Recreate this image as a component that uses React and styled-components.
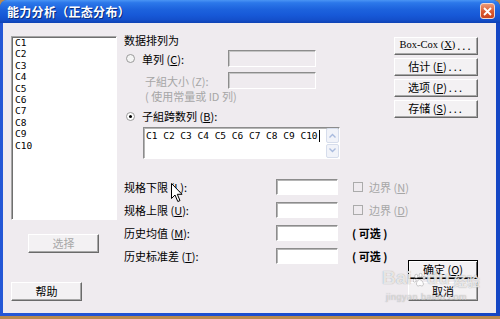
import React from 'react';
import styled, { createGlobalStyle, css } from 'styled-components';

const CJK = `"Noto Sans CJK SC", "Noto Sans", sans-serif`;
const MONO = `"DejaVu Sans Mono", "Liberation Mono", monospace`;
const FACE = '#EFEBEF';

const GlobalStyle = createGlobalStyle`
  html, body {
    margin: 0;
    padding: 0;
    background: #B88A4E;
  }
  body {
    font-family: ${CJK};
    font-size: 11px;
    color: #000;
  }
`;

const Window = styled.div`
  position: relative;
  width: 500px;
  height: 316px;
  display: flex;
  flex-direction: column;
  background: linear-gradient(to right, #2457D6, #1A4ECF 50%, #1446C4);
  border-radius: 7px 7px 0 0;
  overflow: hidden;
`;

const TitleBar = styled.div`
  height: 23px;
  flex-shrink: 0;
  display: flex;
  align-items: center;
  justify-content: space-between;
  padding: 0 5px 0 7px;
  background: linear-gradient(
    to bottom,
    #4A95F4 0%,
    #2C78EA 12%,
    #1D63DD 40%,
    #1759D8 65%,
    #1450CC 85%,
    #0E42B4 100%
  );
  color: #fff;
  font: bold 12px/1 ${CJK};
  text-shadow: 1px 1px 0 #0A2C7A;
  letter-spacing: 0.3px;
`;

const CloseBtn = styled.div`
  width: 15px;
  height: 16px;
  margin-top: -1px;
  box-sizing: border-box;
  border: 1px solid #F3D7CC;
  border-radius: 3px;
  background: linear-gradient(to bottom, #EC9A78, #D9582F 55%, #C9441E);
  display: flex;
  align-items: center;
  justify-content: center;
`;

const Body = styled.div`
  flex: 1;
  margin: 0 4px 3px 3px;
  background: ${FACE};
  display: flex;
  padding: 11px 18px 12px 8px;
  box-sizing: border-box;
`;

const LeftCol = styled.div`
  width: 106px;
  display: flex;
  flex-direction: column;
  padding-top: 2px;
`;

const ListBox = styled.div`
  height: 184px;
  box-sizing: border-box;
  background: #fff;
  border: 1px solid;
  border-color: #A5A5A5 #fff #fff #A5A5A5;
  box-shadow: inset 1px 1px 0 #6F6F6F;
  padding: 0 0 0 3px;
`;

const ListItem = styled.div`
  font: 9.5px/11.4px ${MONO};
  color: #000;
`;

const Button = styled.button`
  box-sizing: border-box;
  width: ${(p) => p.$w || 70}px;
  height: ${(p) => p.$h || 19}px;
  margin: 0;
  padding: 0 0 1px;
  background: #F3F1F3;
  border: 1px solid;
  border-color: #FFFFFF #6A6A6A #6A6A6A #FFFFFF;
  box-shadow: inset -1px -1px 0 #A8A8A8;
  font: 11px/1 ${CJK};
  color: ${(p) => (p.disabled ? '#A8A8A8' : '#000')};
  display: flex;
  align-items: center;
  justify-content: center;
  white-space: nowrap;
  ${(p) =>
    p.$default &&
    css`
      border-color: #000;
      box-shadow: inset 1px 1px 0 #fff, inset -1px -1px 0 #6A6A6A;
    `}
`;

const Dots = styled.span`
  letter-spacing: 2px;
  margin-left: 2px;
`;

const SerifText = styled.span`
  font: 10.5px/1 "Liberation Serif", serif;
`;

const MidCol = styled.div`
  width: 270px;
  margin-left: 7px;
  display: flex;
  flex-direction: column;
`;

const Heading = styled.div`
  height: 12px;
  line-height: 12px;
`;

const OptionRow = styled.div`
  display: grid;
  grid-template-columns: 104px 88px;
  align-items: center;
  height: 17px;
  margin-top: ${(p) => p.$mt || 0}px;
`;

const RadioLabel = styled.label`
  display: flex;
  align-items: center;
  gap: 7px;
  padding-left: 2px;
  line-height: 12px;
  white-space: nowrap;
`;

const Radio = styled.span`
  width: 9px;
  height: 9px;
  box-sizing: border-box;
  border-radius: 50%;
  border: 1px solid #9A9A9A;
  background: ${(p) => (p.$checked ? '#fff' : '#F4F4F4')};
  display: flex;
  align-items: center;
  justify-content: center;
  &::after {
    content: '';
    width: 3px;
    height: 3px;
    border-radius: 50%;
    background: ${(p) => (p.$checked ? '#000' : 'transparent')};
  }
`;

const Indented = styled.div`
  padding-left: 21px;
  color: ${(p) => (p.$dim ? '#A6A6A6' : '#000')};
  line-height: 12px;
  white-space: nowrap;
  margin-top: ${(p) => p.$mt || 0}px;
`;

const Field = styled.div`
  box-sizing: border-box;
  height: ${(p) => p.$h || 16}px;
  background: ${(p) => (p.disabled ? FACE : '#fff')};
  border: 1px solid;
  border-color: #8C8C8C #fff #fff #8C8C8C;
  box-shadow: inset 1px 1px 0 ${(p) => (p.disabled ? '#C4C4C4' : '#B5B5B5')};
`;

const TextArea = styled.div`
  margin: 5px 0 0 19px;
  width: 197px;
  height: 32px;
  box-sizing: border-box;
  background: #fff;
  border: 1px solid;
  border-color: #8C8C8C #fff #fff #8C8C8C;
  box-shadow: inset 1px 1px 0 #B5B5B5;
  display: flex;
`;

const AreaText = styled.div`
  flex: 1;
  padding: 2px 0 0 2px;
  font: 9.5px/12px ${MONO};
  display: flex;
  align-items: flex-start;
  white-space: pre;
`;

const Caret = styled.span`
  display: inline-block;
  width: 1px;
  height: 12px;
  background: #000;
  margin-left: 1px;
`;

const ScrollCol = styled.div`
  width: 13px;
  display: flex;
  flex-direction: column;
  gap: 1px;
`;

const ScrollBtn = styled.div`
  flex: 1;
  background: #F1F3F9;
  border: 1px solid #D6DDEC;
  border-radius: 2px;
  display: flex;
  align-items: center;
  justify-content: center;
`;

const SpecList = styled.div`
  margin-top: 20px;
  display: flex;
  flex-direction: column;
  gap: 7px;
`;

const SpecRow = styled.div`
  display: grid;
  grid-template-columns: 152px 62px 56px;
  align-items: center;
  height: 16px;
  white-space: nowrap;
`;

const Extra = styled.div`
  display: flex;
  align-items: center;
  gap: 6px;
  padding-left: ${(p) => (p.$dim ? 15 : 14)}px;
  color: ${(p) => (p.$dim ? '#A6A6A6' : '#000')};
  font-weight: ${(p) => (p.$bold ? 'bold' : 'normal')};
  overflow: visible;
`;

const CheckBox = styled.span`
  width: 10px;
  height: 10px;
  flex-shrink: 0;
  box-sizing: border-box;
  border: 1px solid #ABABAB;
  background: ${FACE};
`;

const RightCol = styled.div`
  width: 84px;
  display: flex;
  flex-direction: column;
  gap: 3px;
  padding-top: 3px;
`;

const BottomButtons = styled.div`
  margin-top: auto;
  align-self: flex-end;
  display: flex;
  flex-direction: column;
  gap: 3px;
`;

const Watermark = styled.div`
  position: absolute;
  left: 382px;
  top: 268px;
  pointer-events: none;
  color: rgba(255, 255, 255, 0.75);
  text-shadow: 0 0 1px rgba(110, 110, 110, 0.7);
`;

const WmMain = styled.div`
  display: flex;
  align-items: flex-end;
  font: bold 19px/1 "Liberation Sans", sans-serif;
  gap: 1px;
`;

const WmSub = styled.div`
  font: 9px/1 "Liberation Sans", sans-serif;
  margin: 6px 0 0 4px;
  color: rgba(255, 255, 255, 0.55);
  letter-spacing: 0.5px;
`;

const Cursor = styled.svg`
  position: absolute;
  left: 171px;
  top: 183px;
`;

const U = styled.u`
  text-underline-offset: 1px;
`;

const Chevron = ({ up }) => (
  <svg width="7" height="5" viewBox="0 0 7 5">
    <polyline
      points={up ? '0.5,4.5 3.5,1.5 6.5,4.5' : '0.5,0.5 3.5,3.5 6.5,0.5'}
      fill="none"
      stroke="#A9BBDE"
      strokeWidth="1.4"
    />
  </svg>
);

const columns = ['C1', 'C2', 'C3', 'C4', 'C5', 'C6', 'C7', 'C8', 'C9', 'C10'];

const specs = [
  { label: '规格下限', key: 'L', extra: 'bound', boundKey: 'N' },
  { label: '规格上限', key: 'U', extra: 'bound', boundKey: 'D' },
  { label: '历史均值', key: 'M', extra: 'opt' },
  { label: '历史标准差', key: 'T', extra: 'opt' },
];

export default function App() {
  return (
    <>
      <GlobalStyle />
      <Window>
        <TitleBar>
          <span>能力分析（正态分布）</span>
          <CloseBtn>
            <svg width="9" height="9" viewBox="0 0 9 9">
              <path d="M1 1 L8 8 M8 1 L1 8" stroke="#fff" strokeWidth="1.8" />
            </svg>
          </CloseBtn>
        </TitleBar>
        <Body>
          <LeftCol>
            <ListBox>
              {columns.map((c) => (
                <ListItem key={c}>{c}</ListItem>
              ))}
            </ListBox>
            <Button disabled style={{ marginTop: 14, marginLeft: 17 }} $w={71}>
              选择
            </Button>
            <Button style={{ marginTop: 'auto' }} $w={71}>
              帮助
            </Button>
          </LeftCol>

          <MidCol>
            <Heading>数据排列为</Heading>
            <OptionRow $mt={4}>
              <RadioLabel>
                <Radio />
                <span>
                  单列 (<U>C</U>):
                </span>
              </RadioLabel>
              <Field disabled $h={17} />
            </OptionRow>
            <OptionRow $mt={5}>
              <Indented $dim>子組大小 (Z):</Indented>
              <Field disabled $h={17} />
            </OptionRow>
            <Indented $dim $mt={1}>
              ( 使用常量或 ID 列)
            </Indented>
            <RadioLabel style={{ marginTop: 8 }}>
              <Radio $checked />
              <span>
                子組跨数列 (<U>B</U>):
              </span>
            </RadioLabel>
            <TextArea>
              <AreaText>
                C1 C2 C3 C4 C5 C6 C7 C8 C9 C10
                <Caret />
              </AreaText>
              <ScrollCol>
                <ScrollBtn>
                  <Chevron up />
                </ScrollBtn>
                <ScrollBtn>
                  <Chevron />
                </ScrollBtn>
              </ScrollCol>
            </TextArea>

            <SpecList>
              {specs.map((s) => (
                <SpecRow key={s.key}>
                  <span>
                    {s.label} (<U>{s.key}</U>):
                  </span>
                  <Field />
                  {s.extra === 'bound' ? (
                    <Extra $dim>
                      <CheckBox />
                      <span>
                        边界 (<U>{s.boundKey}</U>)
                      </span>
                    </Extra>
                  ) : (
                    <Extra $bold>( 可选 )</Extra>
                  )}
                </SpecRow>
              ))}
            </SpecList>
          </MidCol>

          <RightCol>
            <Button $w={84} $h={18}>
              <SerifText>
                Box-Cox (<U>X</U>)
              </SerifText>
              <Dots>...</Dots>
            </Button>
            <Button $w={84} $h={18}>
              估计 (<U>E</U>)<Dots>...</Dots>
            </Button>
            <Button $w={84} $h={18}>
              选项 (<U>P</U>)<Dots>...</Dots>
            </Button>
            <Button $w={84} $h={18}>
              存储 (<U>S</U>)<Dots>...</Dots>
            </Button>
            <BottomButtons>
              <Button $default>
                确定 (<U>O</U>)
              </Button>
              <Button>取消</Button>
            </BottomButtons>
          </RightCol>
        </Body>

        <Watermark>
          <WmMain>
            <span>Bai</span>
            <svg width="13" height="14" viewBox="0 0 12 13">
              <g fill="rgba(255,255,255,0.8)" stroke="rgba(120,120,120,0.55)" strokeWidth="0.6">
                <ellipse cx="3" cy="3" rx="1.4" ry="1.8" />
                <ellipse cx="7" cy="2" rx="1.4" ry="1.8" />
                <ellipse cx="10.3" cy="4.5" rx="1.3" ry="1.6" />
                <ellipse cx="1.5" cy="7" rx="1.3" ry="1.6" />
                <path d="M6 6 C3 7 2 12 5 12 C6 11.5 7 11.5 8 12 C11 12 9.5 7 6 6 Z" />
              </g>
            </svg>
            <span>du</span>
            <span style={{ fontFamily: CJK, fontSize: 13, marginLeft: 3 }}>经验</span>
          </WmMain>
          <WmSub>jingyan.baidu.com</WmSub>
        </Watermark>

        <Cursor width="13" height="20" viewBox="0 0 13 20">
          <path
            d="M0.5 0.5 L0.5 15.5 L4 12 L6.8 18.5 L9 17.6 L6.3 11.3 L11 11.3 Z"
            fill="#fff"
            stroke="#000"
            strokeWidth="1"
          />
        </Cursor>
      </Window>
    </>
  );
}
